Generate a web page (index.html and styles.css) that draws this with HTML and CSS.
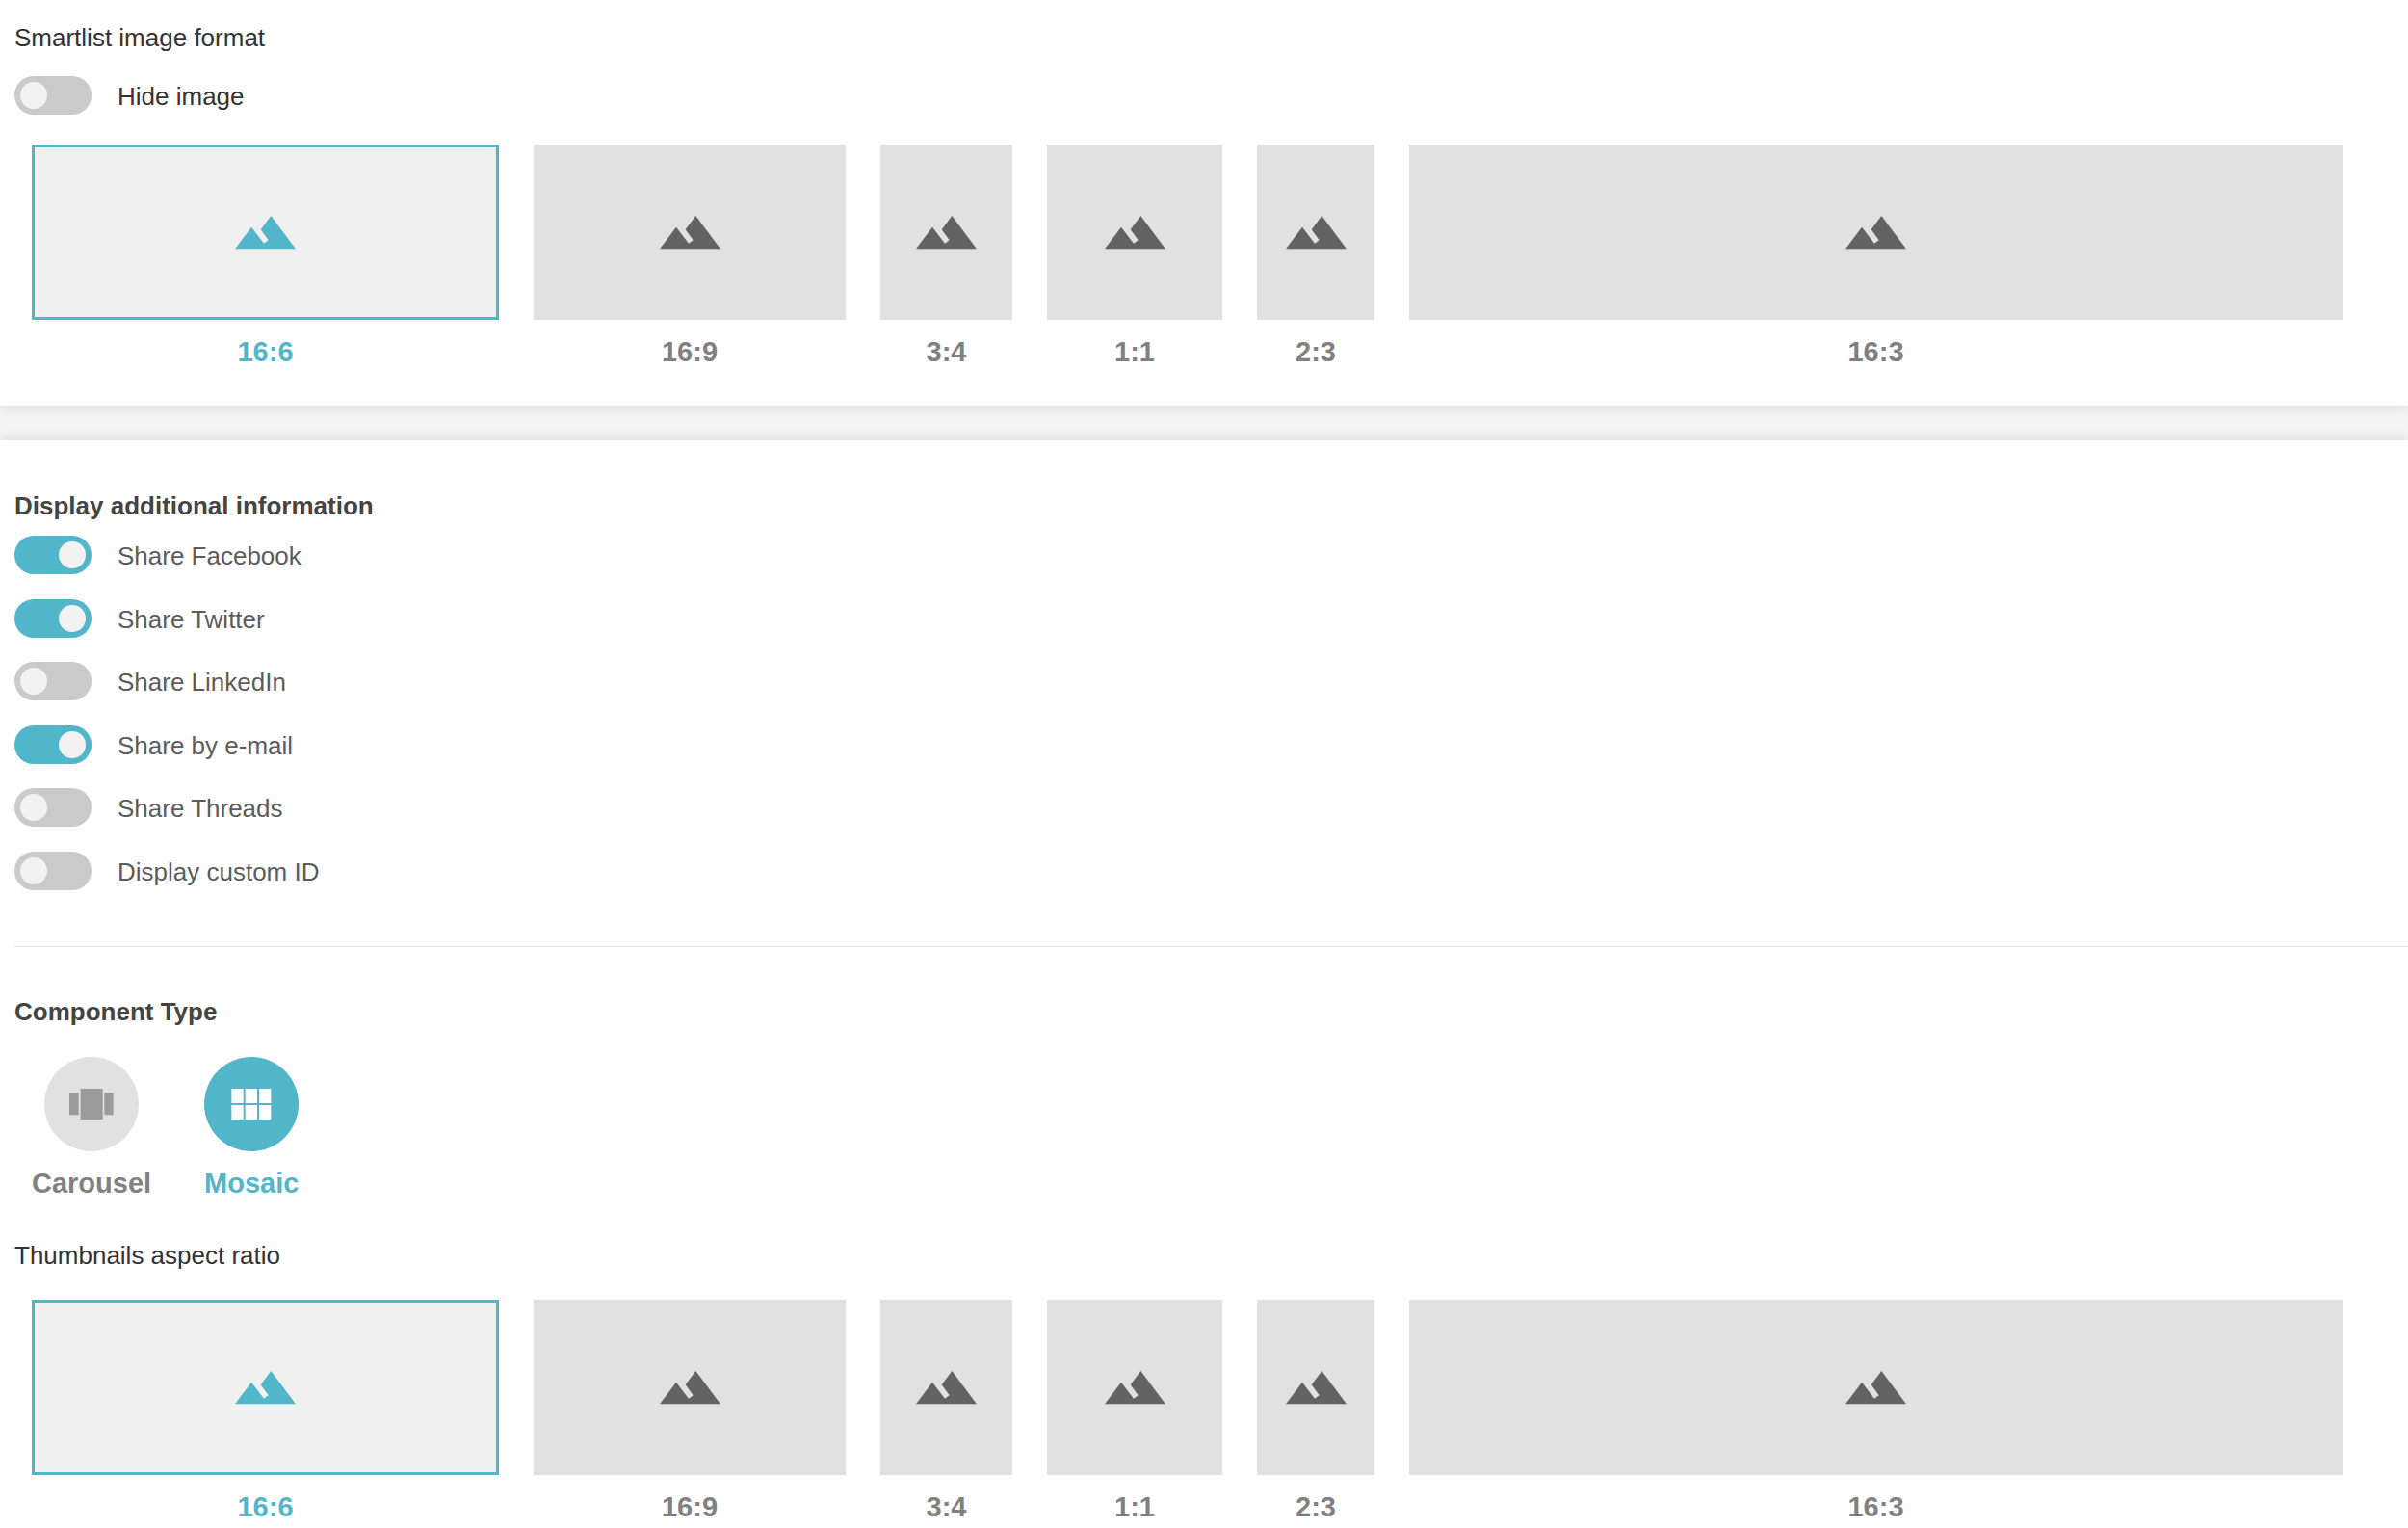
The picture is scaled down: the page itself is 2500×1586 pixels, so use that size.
FILE: index.html
```html
<!DOCTYPE html>
<html lang="en">
<head>
  <meta charset="UTF-8">
  <meta name="viewport" content="width=device-width, initial-scale=1.0">
  <title>Component settings</title>
  <link rel="stylesheet" href="styles.css">
</head>
<body>

<!-- Shared icon -->
<svg class="sprite" aria-hidden="true">
  <symbol id="icon-image" viewBox="0 0 189 105">
    <path d="M0 103L51 35L90 86L104 76L80 43L112 0L189 103Z"/>
  </symbol>
</svg>

<!-- Image format -->
<section class="panel">
  <h3 class="field-title" id="format-title">Smartlist image format</h3>
  <div class="switch-row">
    <input type="checkbox" class="switch" id="hide-image">
    <label for="hide-image" class="switch-label dark">Hide image</label>
  </div>
  <div class="ratios" role="radiogroup" aria-labelledby="format-title">
    <label class="ratio ratio-16-6">
      <input type="radio" name="format" value="16:6" checked>
      <span class="tile"><svg class="icon"><use href="#icon-image"/></svg></span>
      <span class="option-name">16:6</span>
    </label>
    <label class="ratio ratio-16-9">
      <input type="radio" name="format" value="16:9">
      <span class="tile"><svg class="icon"><use href="#icon-image"/></svg></span>
      <span class="option-name">16:9</span>
    </label>
    <label class="ratio ratio-3-4">
      <input type="radio" name="format" value="3:4">
      <span class="tile"><svg class="icon"><use href="#icon-image"/></svg></span>
      <span class="option-name">3:4</span>
    </label>
    <label class="ratio ratio-1-1">
      <input type="radio" name="format" value="1:1">
      <span class="tile"><svg class="icon"><use href="#icon-image"/></svg></span>
      <span class="option-name">1:1</span>
    </label>
    <label class="ratio ratio-2-3">
      <input type="radio" name="format" value="2:3">
      <span class="tile"><svg class="icon"><use href="#icon-image"/></svg></span>
      <span class="option-name">2:3</span>
    </label>
    <label class="ratio ratio-16-3">
      <input type="radio" name="format" value="16:3">
      <span class="tile"><svg class="icon"><use href="#icon-image"/></svg></span>
      <span class="option-name">16:3</span>
    </label>
  </div>
</section>

<section class="panel panel-main">
  <!-- Share options -->
  <h2 class="section-title">Display additional information</h2>
  <div class="switch-list">
    <div class="switch-row">
      <input type="checkbox" class="switch" id="share-facebook" checked>
      <label for="share-facebook" class="switch-label">Share Facebook</label>
    </div>
    <div class="switch-row">
      <input type="checkbox" class="switch" id="share-twitter" checked>
      <label for="share-twitter" class="switch-label">Share Twitter</label>
    </div>
    <div class="switch-row">
      <input type="checkbox" class="switch" id="share-linkedin">
      <label for="share-linkedin" class="switch-label">Share LinkedIn</label>
    </div>
    <div class="switch-row">
      <input type="checkbox" class="switch" id="share-email" checked>
      <label for="share-email" class="switch-label">Share by e-mail</label>
    </div>
    <div class="switch-row">
      <input type="checkbox" class="switch" id="share-threads">
      <label for="share-threads" class="switch-label">Share Threads</label>
    </div>
    <div class="switch-row">
      <input type="checkbox" class="switch" id="custom-id">
      <label for="custom-id" class="switch-label">Display custom ID</label>
    </div>
  </div>

  <hr class="divider">

  <!-- Component type -->
  <h2 class="section-title" id="type-title">Component Type</h2>
  <div class="types" role="radiogroup" aria-labelledby="type-title">
    <label class="type">
      <input type="radio" name="type" value="carousel">
      <span class="circle">
        <svg width="46" height="32" viewBox="0 0 138 96">
          <path d="M0 13h29v69H0zM35 0h69v96H35zM109 13h28v69h-28z"/>
        </svg>
      </span>
      <span class="option-name">Carousel</span>
    </label>
    <label class="type">
      <input type="radio" name="type" value="mosaic" checked>
      <span class="circle">
        <svg width="42" height="32" viewBox="0 0 126 96">
          <path d="M1 0h37v45H1zM44 0h37v45H44zM87 0h37v45H87zM1 51h37v45H1zM44 51h37v45H44zM87 51h37v45H87z"/>
        </svg>
      </span>
      <span class="option-name">Mosaic</span>
    </label>
  </div>

  <!-- Thumbnails -->
  <h3 class="field-title" id="thumbs-title">Thumbnails aspect ratio</h3>
  <div class="ratios" role="radiogroup" aria-labelledby="thumbs-title">
    <label class="ratio ratio-16-6">
      <input type="radio" name="thumbs" value="16:6" checked>
      <span class="tile"><svg class="icon"><use href="#icon-image"/></svg></span>
      <span class="option-name">16:6</span>
    </label>
    <label class="ratio ratio-16-9">
      <input type="radio" name="thumbs" value="16:9">
      <span class="tile"><svg class="icon"><use href="#icon-image"/></svg></span>
      <span class="option-name">16:9</span>
    </label>
    <label class="ratio ratio-3-4">
      <input type="radio" name="thumbs" value="3:4">
      <span class="tile"><svg class="icon"><use href="#icon-image"/></svg></span>
      <span class="option-name">3:4</span>
    </label>
    <label class="ratio ratio-1-1">
      <input type="radio" name="thumbs" value="1:1">
      <span class="tile"><svg class="icon"><use href="#icon-image"/></svg></span>
      <span class="option-name">1:1</span>
    </label>
    <label class="ratio ratio-2-3">
      <input type="radio" name="thumbs" value="2:3">
      <span class="tile"><svg class="icon"><use href="#icon-image"/></svg></span>
      <span class="option-name">2:3</span>
    </label>
    <label class="ratio ratio-16-3">
      <input type="radio" name="thumbs" value="16:3">
      <span class="tile"><svg class="icon"><use href="#icon-image"/></svg></span>
      <span class="option-name">16:3</span>
    </label>
  </div>
</section>

</body>
</html>
```
FILE: styles.css
```css
* {
  box-sizing: border-box;
}

body {
  display: flex;
  flex-direction: column;
  gap: 36px;
  min-height: 100vh;
  margin: 0;
  background-color: #f3f3f3;
  color: #333333;
  font-family: "Helvetica Neue", "Liberation Sans", Arial, sans-serif;
  font-size: 26px;
  line-height: 30px;
}

.sprite {
  display: none;
}

.panel {
  padding: 24px 0 39px 15px;
  background-color: #ffffff;
  box-shadow: 0 0 12px rgba(0, 0, 0, 0.12);
}

.panel-main {
  flex: 1;
  padding-top: 52px;
  padding-bottom: 5px;
}

.field-title {
  margin: 0;
  font-size: 26px;
  font-weight: 400;
}

.section-title {
  margin: 0;
  color: #444444;
  font-size: 26px;
  font-weight: 700;
  line-height: 32px;
}

/* Switches */
.switch-row {
  display: flex;
  align-items: center;
  gap: 27px;
}

.field-title + .switch-row {
  margin-top: 25px;
}

.switch-list {
  display: flex;
  flex-direction: column;
  justify-content: space-between;
  min-height: 368px;
  margin-top: 15px;
}

.switch {
  appearance: none;
  display: flex;
  width: 80px;
  height: 40px;
  margin: 0;
  padding: 6px;
  border-radius: 20px;
  background-color: #cacaca;
  cursor: pointer;
}

.switch::before {
  content: "";
  width: 28px;
  height: 28px;
  border-radius: 50%;
  background-color: #f2f2f2;
}

.switch:checked {
  justify-content: flex-end;
  background-color: #52b6ca;
}

.switch-label {
  padding-top: 2px;
  color: #5c5c5c;
  cursor: pointer;
}

.switch-label.dark {
  color: #333333;
}

/* Aspect ratio options */
.ratios {
  display: flex;
  gap: 36px;
  margin-top: 31px;
  padding-left: 18px;
}

.ratio,
.type {
  display: flex;
  flex-direction: column;
  align-items: center;
  gap: 16px;
  cursor: pointer;
}

.ratio input,
.type input {
  appearance: none;
  width: 0;
  height: 0;
  margin: 0 0 -16px;
}

.ratio-16-6 {
  width: 485px;
}

.ratio-16-9 {
  width: 324px;
}

.ratio-3-4 {
  width: 137px;
}

.ratio-1-1 {
  width: 182px;
}

.ratio-2-3 {
  width: 122px;
}

.ratio-16-3 {
  width: 969px;
}

.tile {
  display: flex;
  align-items: center;
  justify-content: center;
  width: 100%;
  height: 182px;
  background-color: #e1e1e1;
}

.icon {
  width: 63px;
  height: 35px;
  fill: #636363;
}

.option-name {
  color: #818181;
  font-size: 29px;
  font-weight: 700;
  line-height: 34px;
}

input:checked + .tile {
  border: 3px solid #52b6ca;
  background-color: #f0f0f0;
}

input:checked + .tile .icon {
  fill: #52b6ca;
}

input:checked ~ .option-name {
  color: #52b6ca;
}

.divider {
  height: 1px;
  margin: 58px 0 51px;
  border: 0;
  background-color: #e1e1e1;
}

/* Component types */
.types {
  display: flex;
  gap: 55px;
  margin: 31px 0 43px;
  padding-left: 18px;
}

.circle {
  display: flex;
  align-items: center;
  justify-content: center;
  width: 98px;
  height: 98px;
  border-radius: 50%;
  background-color: #e1e1e1;
  fill: #9b9b9b;
}

input:checked + .circle {
  background-color: #52b6ca;
  fill: #ffffff;
}
```
